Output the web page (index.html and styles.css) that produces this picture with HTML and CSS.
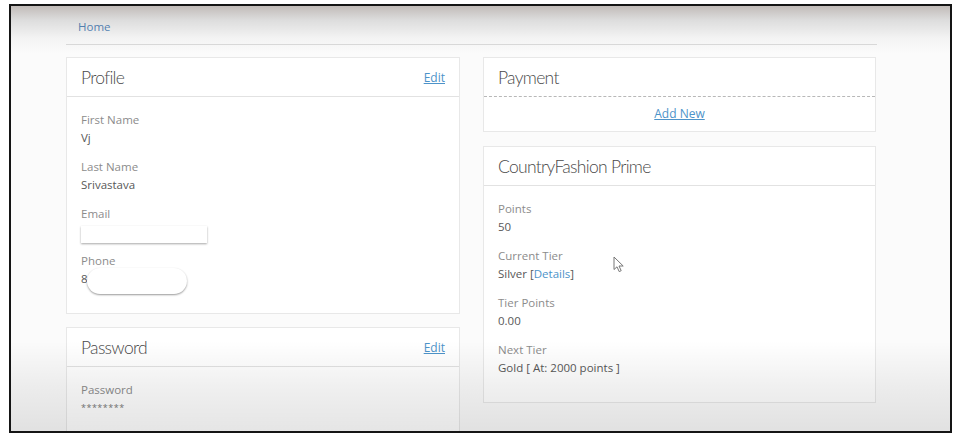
FILE: index.html
```html
<!DOCTYPE html>
<html lang="en">
<head>
  <meta charset="UTF-8">
  <meta name="viewport" content="width=device-width, initial-scale=1.0">
  <title>My Account</title>
  <link rel="stylesheet" href="styles.css">
</head>
<body>
  <div class="frame">
    <div class="page">
      <nav class="crumbs"><a href="#">Home</a></nav>

      <div class="columns">
        <div class="col">
          <section class="card">
            <header class="card-head">
              <h2>Profile</h2>
              <a href="#" class="edit">Edit</a>
            </header>
            <div class="card-body">
              <div class="field">
                <div class="label">First Name</div>
                <div class="value">Vj</div>
              </div>
              <div class="field">
                <div class="label">Last Name</div>
                <div class="value">Srivastava</div>
              </div>
              <div class="field field-email">
                <div class="label">Email</div>
                <div class="redact-box"></div>
              </div>
              <div class="field">
                <div class="label">Phone</div>
                <div class="value phone">8<span class="redact-pill"></span></div>
              </div>
            </div>
          </section>

          <section class="card">
            <header class="card-head">
              <h2>Password</h2>
              <a href="#" class="edit">Edit</a>
            </header>
            <div class="card-body">
              <div class="field">
                <div class="label">Password</div>
                <div class="value stars">********</div>
              </div>
            </div>
          </section>
        </div>

        <div class="col">
          <section class="card">
            <header class="card-head dashed">
              <h2>Payment</h2>
            </header>
            <div class="add-row"><a href="#" class="add-new">Add New</a></div>
          </section>

          <section class="card card-prime">
            <header class="card-head">
              <h2>CountryFashion Prime</h2>
            </header>
            <div class="card-body">
              <div class="field">
                <div class="label">Points</div>
                <div class="value">50</div>
              </div>
              <div class="field">
                <div class="label">Current Tier</div>
                <div class="value">Silver [<a href="#" class="details">Details</a>]</div>
              </div>
              <div class="field">
                <div class="label">Tier Points</div>
                <div class="value">0.00</div>
              </div>
              <div class="field">
                <div class="label">Next Tier</div>
                <div class="value">Gold [ At: 2000 points ]</div>
              </div>
            </div>
            <svg class="cursor" width="12" height="17" viewBox="0 0 12 17">
              <path d="M1 1 L1 13.5 L4 10.8 L6.2 15.6 L8.2 14.7 L6 10 L10.2 10 Z" fill="#fff" stroke="#777" stroke-width="1" stroke-linejoin="round"/>
            </svg>
          </section>
        </div>
      </div>
    </div>
    <div class="shade-top"></div>
    <div class="shade-bottom"></div>
  </div>
</body>
</html>
```

FILE: styles.css
```css
* {
  box-sizing: border-box;
}
body {
  margin: 0;
  background: #fff;
  font-family: 'Open Sans', 'Noto Sans', sans-serif;
  font-size: 11.5px;
  color: #555;
}
a {
  color: #4a8fc7;
  text-decoration: none;
}
.frame {
  position: relative;
  margin: 4px 0 0 9px;
  width: 943px;
  height: 429px;
  border: 2px solid #151515;
  background: #fbfbfb;
  overflow: hidden;
}
.page {
  padding: 12px 73px 0 55px;
}
.crumbs {
  height: 27px;
  padding: 0 12px;
  line-height: 18px;
  border-bottom: 1px solid #dcdcdc;
}
.crumbs a {
  color: #5b8cc0;
}
.columns {
  display: grid;
  grid-template-columns: 394px 393px;
  gap: 23px;
  margin-top: 12px;
}
.card {
  position: relative;
  background: #fff;
  border: 1px solid #e8e8e8;
  margin-bottom: 13px;
}
.col:last-child .card {
  margin-bottom: 14px;
}
.card-head {
  display: flex;
  align-items: center;
  justify-content: space-between;
  height: 39px;
  padding: 0 14px;
  border-bottom: 1px solid #e2e2e2;
}
.card-head.dashed {
  border-bottom: 1px dashed #b8b8b8;
}
.card-head h2 {
  margin: 0;
  font-family: 'Lato', sans-serif;
  font-weight: 300;
  font-size: 17.5px;
  letter-spacing: -0.7px;
  color: #4a4a4a;
}
.edit {
  font-size: 12px;
  text-decoration: underline;
  color: #4d93c9;
}
.card-body {
  padding: 14px 14px 14px;
}
.field {
  margin-bottom: 11px;
  line-height: 18px;
}
.label {
  color: #8c8c8c;
}
.value {
  color: #585858;
}
.field-email {
  margin-bottom: 9px;
}
.redact-box {
  width: 126px;
  height: 17px;
  margin-top: 3px;
  background: #fff;
  box-shadow: 0 1px 2px rgba(0, 0, 0, 0.35);
}
.phone {
  position: relative;
}
.redact-pill {
  position: absolute;
  left: 6px;
  top: -2px;
  width: 100px;
  height: 26px;
  border-radius: 13px;
  background: #fff;
  box-shadow: 0 1px 2px rgba(0, 0, 0, 0.4);
}
.stars {
  font-size: 9px;
  letter-spacing: 0.5px;
  color: #777;
}
.add-row {
  padding: 8px 0;
  line-height: 18px;
  text-align: center;
}
.add-new {
  font-size: 12px;
  text-decoration: underline;
  color: #4d93c9;
}
.details {
  color: #4d93c9;
}
.cursor {
  position: absolute;
  left: 129px;
  top: 109px;
}
.shade-top {
  position: absolute;
  left: 0;
  right: 0;
  top: 0;
  height: 48px;
  background: linear-gradient(rgba(60, 40, 30, 0.3), rgba(0, 0, 0, 0.12) 14px, rgba(0, 0, 0, 0.03) 32px, rgba(0, 0, 0, 0));
  pointer-events: none;
}
.shade-bottom {
  position: absolute;
  left: 0;
  right: 0;
  bottom: 0;
  height: 90px;
  background: linear-gradient(rgba(0, 0, 0, 0), rgba(0, 0, 0, 0.06) 45px, rgba(0, 0, 0, 0.1));
  pointer-events: none;
}
```
